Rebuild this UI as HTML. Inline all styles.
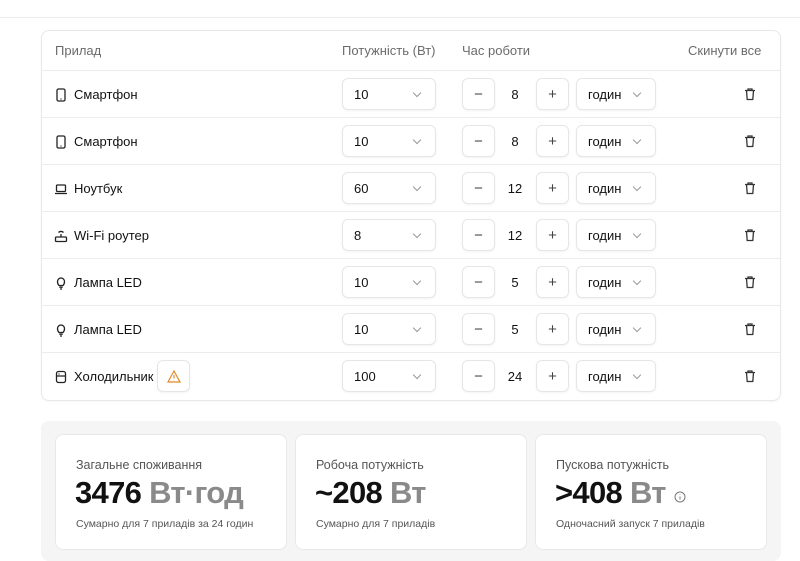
<!DOCTYPE html>
<html><head><meta charset="utf-8"><style>
*{box-sizing:border-box;margin:0;padding:0}
body{width:800px;height:553px;overflow:hidden;background:#fff;font-family:"Liberation Sans",sans-serif;color:#111;position:relative}
.topline{position:absolute;left:0;right:0;top:17px;border-top:1px solid #ececec}
.card{position:absolute;left:41px;top:30px;width:740px;height:371px;border:1px solid #e8e8e8;border-radius:8px;box-shadow:0 1px 2px rgba(0,0,0,.04)}
.hdr{position:absolute;top:12px;font-size:13px;color:#6b6b6b}
.row{position:absolute;left:0;width:738px;height:47px;border-top:1px solid #ececec}
.name{position:absolute;left:12px;top:16px;font-size:13px;display:flex;align-items:center;gap:6px}
.name svg{width:14px;height:14px}
.box{position:absolute;top:7px;height:32px;border:1px solid #e6e6e6;border-radius:6px;box-shadow:0 1px 2px rgba(0,0,0,.05);font-size:13px;display:flex;align-items:center}
.sel{padding-left:11px}
.sel:after{content:"";position:absolute;right:15px;top:11px;width:5px;height:5px;border-right:1px solid #999;border-bottom:1px solid #999;transform:rotate(45deg)}
.btn{justify-content:center;width:33px;font-size:15px;color:#444}
.num{position:absolute;top:16px;width:40px;text-align:center;font-size:13px}
.trash{position:absolute;left:701px;top:16px}
.sum{position:absolute;left:41px;top:421px;width:740px;height:140px;background:#f5f5f5;border-radius:8px}
.sc{position:absolute;top:13px;width:232px;height:116px;background:#fff;border:1px solid #e8e8e8;border-radius:8px}
.sc .l{position:absolute;left:20px;top:23px;font-size:12.5px;color:#555}
.sc .v{position:absolute;left:19px;top:40px;font-size:31px;font-weight:bold;letter-spacing:-.7px}
.sc .v span{color:#8a8a8a}
.sc .s{position:absolute;left:20px;top:83px;font-size:10.5px;color:#555}
</style></head><body>
<div class="topline"></div>
<div class="card">
<div class="hdr" style="left:13px">Прилад</div>
<div class="hdr" style="left:300px">Потужність (Вт)</div>
<div class="hdr" style="left:420px">Час роботи</div>
<div class="hdr" style="left:646px">Скинути все</div>
<div class="row" style="top:39px"><div class="name"><svg viewBox="0 0 14 14" fill="none" stroke="#222" stroke-width="1.3"><rect x="3" y="1" width="8" height="12" rx="1.5"/><path d="M6.5 11h1"/></svg>Смартфон</div>
<div class="box sel" style="left:300px;width:94px">10</div><div class="box btn" style="left:420px">−</div><div class="num" style="left:453px">8</div><div class="box btn" style="left:494px">+</div><div class="box sel" style="left:534px;width:80px">годин</div><svg class="trash" width="14" height="14" viewBox="0 0 14 14" fill="none" stroke="#333" stroke-width="1.3"><path d="M2 3.5h10M5 3.5V2h4v1.5M3.5 3.5l.7 9h5.6l.7-9"/></svg></div>
<div class="row" style="top:86px"><div class="name"><svg viewBox="0 0 14 14" fill="none" stroke="#222" stroke-width="1.3"><rect x="3" y="1" width="8" height="12" rx="1.5"/><path d="M6.5 11h1"/></svg>Смартфон</div>
<div class="box sel" style="left:300px;width:94px">10</div><div class="box btn" style="left:420px">−</div><div class="num" style="left:453px">8</div><div class="box btn" style="left:494px">+</div><div class="box sel" style="left:534px;width:80px">годин</div><svg class="trash" width="14" height="14" viewBox="0 0 14 14" fill="none" stroke="#333" stroke-width="1.3"><path d="M2 3.5h10M5 3.5V2h4v1.5M3.5 3.5l.7 9h5.6l.7-9"/></svg></div>
<div class="row" style="top:133px"><div class="name"><svg viewBox="0 0 14 14" fill="none" stroke="#222" stroke-width="1.3"><rect x="2.5" y="3" width="9" height="6.5" rx="1"/><path d="M1 11.5h12"/></svg>Ноутбук</div>
<div class="box sel" style="left:300px;width:94px">60</div><div class="box btn" style="left:420px">−</div><div class="num" style="left:453px">12</div><div class="box btn" style="left:494px">+</div><div class="box sel" style="left:534px;width:80px">годин</div><svg class="trash" width="14" height="14" viewBox="0 0 14 14" fill="none" stroke="#333" stroke-width="1.3"><path d="M2 3.5h10M5 3.5V2h4v1.5M3.5 3.5l.7 9h5.6l.7-9"/></svg></div>
<div class="row" style="top:180px"><div class="name"><svg viewBox="0 0 14 14" fill="none" stroke="#222" stroke-width="1.3"><rect x="1.5" y="8" width="11" height="4.5" rx="1"/><path d="M7 8V5M4.5 3.5a3.5 3.5 0 0 1 5 0M3.5 10.3h.1"/></svg>Wi-Fi роутер</div>
<div class="box sel" style="left:300px;width:94px">8</div><div class="box btn" style="left:420px">−</div><div class="num" style="left:453px">12</div><div class="box btn" style="left:494px">+</div><div class="box sel" style="left:534px;width:80px">годин</div><svg class="trash" width="14" height="14" viewBox="0 0 14 14" fill="none" stroke="#333" stroke-width="1.3"><path d="M2 3.5h10M5 3.5V2h4v1.5M3.5 3.5l.7 9h5.6l.7-9"/></svg></div>
<div class="row" style="top:227px"><div class="name"><svg viewBox="0 0 14 14" fill="none" stroke="#222" stroke-width="1.3"><path d="M5 9.5C4 8.5 3.5 7.5 3.5 5.5a3.5 3.5 0 0 1 7 0c0 2-.5 3-1.5 4zM5.3 11.2h3.4M6 13h2"/></svg>Лампа LED</div>
<div class="box sel" style="left:300px;width:94px">10</div><div class="box btn" style="left:420px">−</div><div class="num" style="left:453px">5</div><div class="box btn" style="left:494px">+</div><div class="box sel" style="left:534px;width:80px">годин</div><svg class="trash" width="14" height="14" viewBox="0 0 14 14" fill="none" stroke="#333" stroke-width="1.3"><path d="M2 3.5h10M5 3.5V2h4v1.5M3.5 3.5l.7 9h5.6l.7-9"/></svg></div>
<div class="row" style="top:274px"><div class="name"><svg viewBox="0 0 14 14" fill="none" stroke="#222" stroke-width="1.3"><path d="M5 9.5C4 8.5 3.5 7.5 3.5 5.5a3.5 3.5 0 0 1 7 0c0 2-.5 3-1.5 4zM5.3 11.2h3.4M6 13h2"/></svg>Лампа LED</div>
<div class="box sel" style="left:300px;width:94px">10</div><div class="box btn" style="left:420px">−</div><div class="num" style="left:453px">5</div><div class="box btn" style="left:494px">+</div><div class="box sel" style="left:534px;width:80px">годин</div><svg class="trash" width="14" height="14" viewBox="0 0 14 14" fill="none" stroke="#333" stroke-width="1.3"><path d="M2 3.5h10M5 3.5V2h4v1.5M3.5 3.5l.7 9h5.6l.7-9"/></svg></div>
<div class="row" style="top:321px;border-bottom:none"><div class="name"><svg viewBox="0 0 14 14" fill="none" stroke="#222" stroke-width="1.3"><rect x="2.5" y="1.5" width="9" height="11" rx="2"/><path d="M2.5 6h9M5 3.5v1"/></svg>Холодильник</div>
<div class="box" style="left:115px;width:33px;justify-content:center;top:7px"><svg width="14" height="13" viewBox="0 0 14 13" fill="none" stroke="#e08a2c" stroke-width="1.2"><path d="M7 1L1 12h12z M7 5v3.5M7 10v.3"/></svg></div>
<div class="box sel" style="left:300px;width:94px">100</div><div class="box btn" style="left:420px">−</div><div class="num" style="left:453px">24</div><div class="box btn" style="left:494px">+</div><div class="box sel" style="left:534px;width:80px">годин</div><svg class="trash" width="14" height="14" viewBox="0 0 14 14" fill="none" stroke="#333" stroke-width="1.3"><path d="M2 3.5h10M5 3.5V2h4v1.5M3.5 3.5l.7 9h5.6l.7-9"/></svg></div>
</div>
<div class="sum">
<div class="sc" style="left:14px"><div class="l">Загальне споживання</div><div class="v">3476 <span>Вт·год</span></div><div class="s">Сумарно для 7 приладів за 24 годин</div></div>
<div class="sc" style="left:254px"><div class="l">Робоча потужність</div><div class="v">~208 <span>Вт</span></div><div class="s">Сумарно для 7 приладів</div></div>
<div class="sc" style="left:494px"><div class="l">Пускова потужність</div><div class="v">&gt;408 <span>Вт</span> <svg width="12" height="12" viewBox="0 0 12 12" fill="none" stroke="#777" stroke-width="1"><circle cx="6" cy="6" r="5"/><path d="M6 5.5v3M6 3.5v.5"/></svg></div><div class="s">Одночасний запуск 7 приладів</div></div>
</div>
</body></html>
